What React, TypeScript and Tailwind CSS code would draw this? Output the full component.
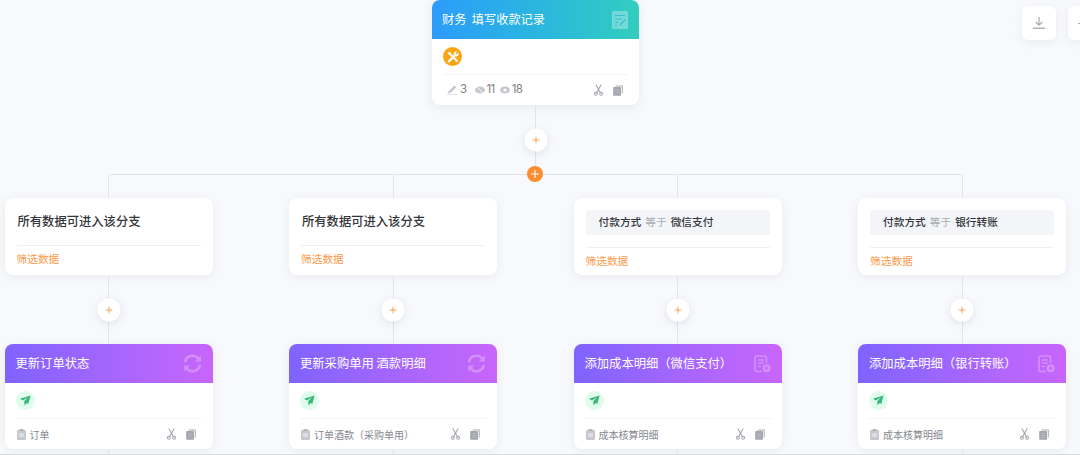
import React from "react";

const font = { fontFamily: '"Noto Sans CJK SC", "Noto Sans", sans-serif' };

const Scissors = () => (
  <svg width="9" height="12" viewBox="0 0 9 12" fill="none" stroke="#a3a6ad" strokeWidth="1.1">
    <circle cx="1.9" cy="9.8" r="1.4" />
    <circle cx="7.1" cy="9.8" r="1.4" />
    <path d="M2.7 8.6 7.2 .5M6.3 8.6 1.8 .5" />
  </svg>
);

const Copy = () => (
  <svg width="10" height="11" viewBox="0 0 10 11">
    <path d="M2.6.4h6.6a.6.6 0 0 1 .6.6v7.6h-1V1.4H2.6z" fill="#a9acb3" />
    <rect x=".2" y="2" width="7.8" height="8.8" rx=".8" fill="#a3a6ad" />
    <path d="M1.8 4.6h4.6M1.8 6.4h4.6M1.8 8.2h4.6" stroke="#bfc1c7" strokeWidth=".7" />
  </svg>
);

const Clip = () => (
  <svg width="9" height="11" viewBox="0 0 9 11">
    <rect x="0" y="1" width="9" height="10" rx="1.2" fill="#c6c8ce" />
    <rect x="2.5" y="0" width="4" height="2" rx=".6" fill="#b3b5bc" />
    <path d="M2 5h5M2 7h5" stroke="#fff" strokeWidth=".8" />
  </svg>
);

const Refresh = () => (
  <svg width="19" height="19" viewBox="0 0 19 19" fill="none" stroke="#fff" strokeOpacity=".28" strokeWidth="2.6">
    <path d="M2 8.2A7.6 7.6 0 0 1 15.2 4.4" />
    <path d="M17 10.8A7.6 7.6 0 0 1 3.8 14.6" />
    <path d="M17.8 1.5v6h-6z" fill="#fff" fillOpacity=".28" stroke="none" />
    <path d="M1.2 17.5v-6h6z" fill="#fff" fillOpacity=".28" stroke="none" />
  </svg>
);

const AddDoc = () => (
  <svg width="17" height="18" viewBox="0 0 17 18" fill="none" stroke="#fff" strokeOpacity=".28">
    <path d="M8 16.5H3A2 2 0 0 1 1 14.5V3a2 2 0 0 1 2-2h7.5a2 2 0 0 1 2 2v5" strokeWidth="1.7" />
    <path d="M3.8 5h6M3.8 8h6M3.8 11.5h3" strokeWidth="1.5" />
    <circle cx="12.6" cy="13.2" r="4" fill="#fff" fillOpacity=".28" stroke="none" />
    <path d="M10.8 13.2h3.6M12.6 11.4V15" stroke="#c465f8" strokeOpacity="1" strokeWidth="1" />
  </svg>
);

const FormIcon = () => (
  <svg width="16" height="18" viewBox="0 0 16 18">
    <rect width="16" height="18" rx="1" fill="#fff" fillOpacity=".32" />
    <path d="M3 4.5h10M3 8h7M3 11.5h3.5M3 14.5h2" stroke="#3bbdcf" strokeWidth="1.1" />
    <path d="M8 14 13.5 8.5" stroke="#3bbdcf" strokeWidth="1.5" />
  </svg>
);

const Tools = () => (
  <span className="flex h-[19px] w-[19px] items-center justify-center rounded-full bg-[#fba514]">
    <svg width="12" height="12" viewBox="0 0 12 12" fill="none" stroke="#fff">
      <path d="M1.8 10.4 7.6 4.4" strokeWidth="2.2" strokeLinecap="round" />
      <path d="M2.6 2.6 10 10" strokeWidth="2" strokeLinecap="round" />
      <path d="M1 2.2 2.2 1 4 2.4 2.4 4z" fill="#fff" strokeWidth=".6" />
      <path d="M6.9 2.4A2.3 2.3 0 0 1 9.9.6L8.5 2.2l.2 1 1 .3 1.6-1.4a2.3 2.3 0 0 1-3 3z" fill="#fff" strokeWidth=".4" />
    </svg>
  </span>
);

const Send = () => (
  <span className="flex h-[19px] w-[19px] items-center justify-center rounded-full bg-[#e0fcec]">
    <svg width="11" height="11" viewBox="0 0 11 11">
      <path d="M10.6.6 0 3.8l2.8 1.7 5-3-3.6 3.8.4 4.2 2-2.4 1.7 1z" fill="#3bb67b" />
    </svg>
  </span>
);

const SmallPlus = () => (
  <span className="absolute left-1/2 top-1/2 flex h-[23px] w-[23px] -translate-x-1/2 -translate-y-1/2 items-center justify-center rounded-full bg-white shadow-[0_2px_8px_rgba(120,130,160,0.18)]">
    <svg width="7" height="7" viewBox="0 0 7 7" stroke="#fb9a3c" strokeWidth="0.9">
      <path d="M0 3.5h7M3.5 0v7" />
    </svg>
  </span>
);

const Line = ({ className }: { className: string }) => (
  <div className={`relative mx-auto w-px bg-[#e2e4ea] ${className}`} />
);

const Foot = ({ label }: { label: string }) => (
  <div className="mx-[11px] flex h-[30px] items-center border-t border-[#f3f4f6] pl-px pr-[6px] pt-px">
    <Clip />
    <span className="ml-[4px] text-[10px] text-[#85888f]">{label}</span>
    <span className="ml-auto flex items-center gap-[10px]">
      <Scissors />
      <Copy />
    </span>
  </div>
);

const ActionCard = ({ title, icon, label }: { title: string; icon: React.ReactNode; label: string }) => (
  <div className="h-[104.5px] overflow-hidden rounded-lg bg-white shadow-[0_2px_10px_rgba(120,130,160,0.12)]">
    <div className="flex h-[39px] items-center justify-between bg-gradient-to-r from-[#7f63ff] to-[#c865fb] px-[11px] text-[12.3px] text-white">
      <span>{title}</span>
      {icon}
    </div>
    <div className="flex h-[35px] items-center pl-[11px]">
      <Send />
    </div>
    <Foot label={label} />
  </div>
);

const AllData = () => (
  <div className="h-[77px] rounded-lg bg-white px-[12px] shadow-[0_2px_10px_rgba(120,130,160,0.12)]">
    <div className="flex h-[47.5px] items-center border-b border-[#eeeff2] pl-px text-[12.3px] font-medium text-[#33353a]">所有数据可进入该分支</div>
    <div className="flex h-[28px] items-center text-[10.7px] text-[#fb9a4b]">筛选数据</div>
  </div>
);

const Cond = ({ value }: { value: string }) => (
  <div className="h-[77px] rounded-lg bg-white px-[12px] shadow-[0_2px_10px_rgba(120,130,160,0.12)]">
    <div className="flex h-[50px] items-center border-b border-[#eeeff2]">
      <div className="flex h-[25px] w-full items-center gap-[4px] rounded-[3px] bg-[#f4f5f9] pl-[13px] text-[10.7px] font-medium text-[#33353a]">
        <span>付款方式</span>
        <span className="font-normal text-[#a9abb0]">等于</span>
        <span>{value}</span>
      </div>
    </div>
    <div className="flex h-[27px] items-center text-[10.7px] text-[#fb9a4b]">筛选数据</div>
  </div>
);

const branches = [
  { top: <AllData />, title: "更新订单状态", icon: <Refresh />, label: "订单" },
  { top: <AllData />, title: "更新采购单用 酒款明细", icon: <Refresh />, label: "订单酒款（采购单用）" },
  { top: <Cond value="微信支付" />, title: "添加成本明细（微信支付）", icon: <AddDoc />, label: "成本核算明细" },
  { top: <Cond value="银行转账" />, title: "添加成本明细（银行转账）", icon: <AddDoc />, label: "成本核算明细" },
];

export default function App() {
  return (
    <div style={font} className="relative h-[455px] w-[1080px] overflow-hidden border-b border-[#d9dadd] bg-[#f8f9fc]">
      <div className="ml-[432px] w-[207px]">
        <div className="h-[105px] overflow-hidden rounded-lg bg-white shadow-[0_2px_10px_rgba(120,130,160,0.14)]">
          <div className="flex h-[39px] items-center justify-between bg-gradient-to-r from-[#2d9bfb] to-[#33cdbf] pl-[10px] pr-[11px] text-[12.2px] text-white">
            <span className="whitespace-pre">财务  填写收款记录</span>
            <FormIcon />
          </div>
          <div className="flex h-[35px] items-center pl-[11px]">
            <Tools />
          </div>
          <div className="mx-[11px] flex h-[31px] items-center border-t border-[#f3f4f6] pl-[4px] pr-[5px] font-['Inter'] text-[11.5px] tracking-[-0.6px] text-[#7c7f86]">
            <svg width="10" height="10" viewBox="0 0 10 10">
              <path d="M0 9.5h10" stroke="#d8d9dd" strokeWidth=".8" />
              <path d="M1 8.5 1.6 6.3 7.5.6l1.8 1.8L3.3 8z" fill="#c6c8ce" />
            </svg>
            <span className="ml-[3px]">3</span>
            <svg className="ml-[8px]" width="10" height="8" viewBox="0 0 10 8">
              <ellipse cx="5" cy="4" rx="5" ry="3.5" fill="#c6c8ce" />
              <path d="M2 1 8 7" stroke="#fff" strokeWidth=".8" />
            </svg>
            <span className="ml-[2px]">11</span>
            <svg className="ml-[5px]" width="10" height="8" viewBox="0 0 10 8">
              <ellipse cx="5" cy="4" rx="5" ry="3.5" fill="#c6c8ce" />
              <circle cx="5" cy="4" r="1.6" fill="#fff" />
            </svg>
            <span className="ml-[2px]">18</span>
            <span className="ml-auto flex items-center gap-[10px]">
              <Scissors />
              <Copy />
            </span>
          </div>
        </div>
        <div className="relative mx-auto h-[69px] w-px bg-[#e2e4ea]">
          <span className="absolute left-1/2 top-[35px] h-0 w-0">
            <SmallPlus />
          </span>
          <span className="absolute left-[-8px] top-[61px] flex h-[16px] w-[16px] items-center justify-center rounded-full bg-[#fb8d2f]">
            <svg width="8" height="8" viewBox="0 0 8 8" stroke="#fff" strokeWidth="1.1">
              <path d="M0 4h8M4 0v8" />
            </svg>
          </span>
        </div>
      </div>

      <div className="ml-[109px] mr-[117px] h-px bg-[#e2e4ea]" />

      <div className="flex gap-[76.5px] pl-[4.5px]">
        {branches.map((b) => (
          <div key={b.title} className="w-[208px] shrink-0">
            <Line className="h-[23px]" />
            {b.top}
            <div className="relative mx-auto h-[69px] w-px bg-[#e2e4ea]">
              <span className="absolute left-1/2 top-[35px] h-0 w-0">
                <SmallPlus />
              </span>
            </div>
            <ActionCard title={b.title} icon={b.icon} label={b.label} />
            <Line className="h-[6px]" />
          </div>
        ))}
      </div>

      <button className="absolute left-[1021.5px] top-[6px] flex h-[34px] w-[34px] items-center justify-center rounded-md bg-white shadow-[0_2px_8px_rgba(120,130,160,0.12)]">
        <svg width="12" height="12" viewBox="0 0 12 12" fill="none" stroke="#a8abb6" strokeWidth="1.2">
          <path d="M6 0v8M2.8 5 6 8.2 9.2 5" />
          <path d="M0 11.2h12" strokeWidth="1.4" />
        </svg>
      </button>
      <button className="absolute left-[1067.5px] top-[6px] flex h-[34px] w-[34px] items-center justify-center rounded-md bg-white shadow-[0_2px_8px_rgba(120,130,160,0.12)]">
        <span className="absolute left-[10px] h-px w-[3px] bg-[#a8abb6]" />
      </button>
    </div>
  );
}
